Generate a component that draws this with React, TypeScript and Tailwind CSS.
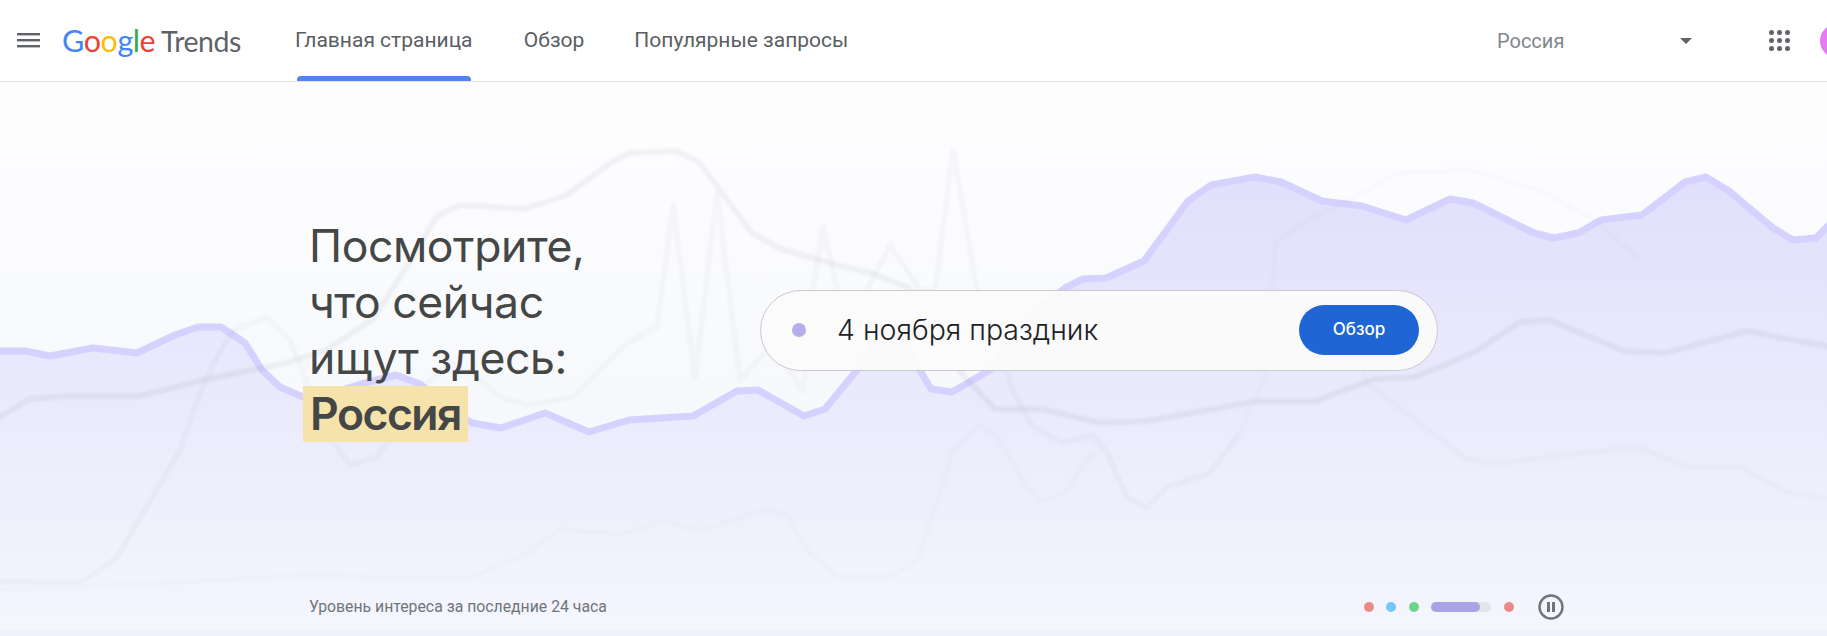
import React from 'react';

const interestLine =
  'M-5 351 L25 351 L50 356 L93 348 L137 353 L175 335 L198 327 L221 327 L245 343 L262 370 L280 387 L310 400 L361 384 L396 375 L420 384 L450 410 L472 423 L501 428 L545 413 L589 432 L629 420 L693 416 L737 391 L758 390 L804 416 L825 409 L857 370 L885 330 L905 345 L931 389 L952 392 L990 370 L1030 315 L1065 288 L1083 279 L1106 278 L1144 261 L1188 201 L1211 185 L1255 177 L1281 182 L1322 201 L1362 206 L1406 220 L1450 199 L1473 203 L1534 233 L1554 238 L1578 233 L1601 220 L1642 215 L1685 182 L1706 177 L1729 191 L1773 228 L1793 240 L1816 238 L1832 222';

const backgroundLines = [
  {
    d: 'M-5 420 L29 399 L70 396 L140 396 L204 380 L286 363 L326 350 L373 319 L402 274 L437 216 L460 205 L524 209 L565 196 L612 162 L629 153 L676 151 L699 162 L752 233 L781 249 L833 264 L874 274 L909 288 L940 335 L961 373 L995 409 L1042 409 L1100 423 L1147 421 L1257 401 L1316 401 L1374 379 L1415 377 L1473 353 L1520 322 L1549 320 L1624 351 L1665 353 L1747 331 L1787 339 L1832 347',
    stroke: 'stroke-black/[0.045]',
  },
  {
    d: 'M-5 582 L80 582 L100 570 L117 557 L143 513 L180 450 L200 393 L217 357 L233 330 L267 317 L290 340 L307 383 L327 433 L350 465 L377 457 L393 433 L425 385 L450 362 L477 377 L500 397 L527 405 L573 397 L627 343 L657 327 L673 205 L695 378 L717 192 L740 380 L767 350 L790 370 L803 392 L813 290 L823 227 L837 290 L850 350 L867 290 L890 245 L920 290 L935 290 L953 150 L977 290 L1007 370 L1012 390 L1033 427 L1063 443 L1093 435 L1107 453 L1127 497 L1147 508 L1167 487 L1210 473 L1240 433',
    stroke: 'stroke-black/[0.025]',
  },
  {
    d: 'M1240 433 L1269 367 L1275 243 L1300 225 L1351 199 L1397 173 L1473 170 L1543 192 L1595 220 L1640 260',
    stroke: 'stroke-black/[0.01]',
  },
  {
    d: 'M-5 590 L120 585 L315 575 L408 579 L466 579 L524 555 L560 530 L624 534 L664 520 L700 531 L763 510 L787 515 L807 550 L837 577 L890 577 L917 560 L937 503 L953 450 L980 425 L997 437 L1027 487 L1040 502 L1063 493 L1093 453',
    stroke: 'stroke-black/[0.01]',
  },
  {
    d: 'M1330 300 L1368 384 L1467 459 L1496 464 L1555 456 L1636 447 L1688 467 L1741 467 L1787 493 L1832 499',
    stroke: 'stroke-black/[0.016]',
  },
];

function TrendBackdrop() {
  return (
    <svg className="absolute inset-0 w-full h-full" viewBox="0 0 1827 636" fill="none">
      <defs>
        <linearGradient id="interestFill" x1="0" y1="177" x2="0" y2="620" gradientUnits="userSpaceOnUse">
          <stop offset="0" stopColor="#e2dffc" />
          <stop offset="0.55" stopColor="#ebebfc" />
          <stop offset="1" stopColor="#f4f5fd" />
        </linearGradient>
      </defs>
      <path d={`${interestLine} L1832 640 L-5 640 Z`} fill="url(#interestFill)" />
      <path d={interestLine} className="stroke-[#d6d2ff]" strokeWidth={7} strokeLinejoin="round" />
      <g className="blur-[1px]">
        {backgroundLines.map((line) => (
          <path key={line.d} d={line.d} className={line.stroke} strokeWidth={6} strokeLinejoin="round" />
        ))}
      </g>
    </svg>
  );
}

function GoogleTrendsLogo() {
  return (
    <div className="flex items-baseline font-['Lato',sans-serif] text-[30.5px] leading-none tracking-[-0.5px]">
      <span className="text-[#4285f4]">G</span>
      <span className="text-[#ea4335]">o</span>
      <span className="text-[#fbbc05]">o</span>
      <span className="text-[#4285f4]">g</span>
      <span className="text-[#34a853]">l</span>
      <span className="text-[#ea4335]">e</span>
      <span className="ml-[6px] text-[#5f6368] text-[28.5px] font-normal">Trends</span>
    </div>
  );
}

function Header() {
  return (
    <header className="relative z-10 flex items-center h-[82px] shrink-0 bg-white border-b border-[#e2e2e2] font-['Roboto',sans-serif]">
      <svg className="ml-[17px] w-[23px] h-[15px] shrink-0" viewBox="0 0 23 15" fill="#5f6368">
        <rect width="23" height="2.4" y="0" />
        <rect width="23" height="2.4" y="6" />
        <rect width="23" height="2.4" y="12" />
      </svg>
      <div className="ml-[22px]">
        <GoogleTrendsLogo />
      </div>
      <nav className="flex ml-[54px] h-full text-[21px] font-normal text-[#5a5e63] whitespace-nowrap">
        <a className="relative flex items-center w-[178px] justify-center">
          Главная страница
          <span className="absolute bottom-0 left-[2px] right-[2px] h-[5px] rounded-t-[4px] bg-[#4f86e8]" />
        </a>
        <a className="flex items-center ml-[51px]">Обзор</a>
        <a className="flex items-center ml-[50px]">Популярные запросы</a>
      </nav>
      <div className="ml-auto flex items-center">
        <span className="text-[20px] text-[#80868b] w-[183px]">Россия</span>
        <span className="w-0 h-0 border-x-[6px] border-x-transparent border-t-[6px] border-t-[#5f6368]" />
        <svg className="ml-[77px] w-[21px] h-[21px]" viewBox="0 0 21 21" fill="#5f6368">
          {[2.5, 10.5, 18.5].flatMap((cy) =>
            [2.5, 10.5, 18.5].map((cx) => <circle key={`${cx}-${cy}`} cx={cx} cy={cy} r="2.5" />)
          )}
        </svg>
        <div className="ml-[30px] -mr-[27px] w-[34px] h-[34px] rounded-full bg-[#e57bf3]" />
      </div>
    </header>
  );
}

export default function App() {
  return (
    <div className="relative flex flex-col h-[636px] overflow-hidden bg-gradient-to-b from-white via-[#f9fafd] to-[#f4f5fc]">
      <TrendBackdrop />
      <Header />

      <main className="relative flex-1 flex items-center pl-[309px] font-['Inter',sans-serif] text-[#444746]">
        <h1 className="w-[451px] text-[44.5px] leading-[56px] font-normal tracking-[-0.4px]">
          Посмотрите,
          <br />
          что сейчас
          <br />
          ищут здесь:
          <br />
          <span className="inline-block -ml-[6px] px-[7px] bg-[#f6e2ab] font-semibold tracking-[-1.5px]">Россия</span>
        </h1>
        <div className="flex items-center w-[678px] h-[81px] rounded-full border border-[#c9c9ce] bg-[#fbfbfb]/95">
          <span className="ml-[31px] w-[14px] h-[14px] rounded-full bg-[#b4afea]" />
          <span className="ml-[31px] text-[28.5px] text-[#202124] font-light">4 ноября праздник</span>
          <button className="ml-auto mr-[18px] w-[120px] h-[50px] rounded-full bg-[#1f66d4] text-white text-[17px] font-medium">
            Обзор
          </button>
        </div>
      </main>

      <footer className="relative flex items-center h-[52px] pt-[5px] pl-[309px] mb-[6px] font-['Roboto',sans-serif]">
        <span className="text-[15.8px] text-[#70757a] whitespace-nowrap">Уровень интереса за последние 24 часа</span>
        <div className="ml-[757px] flex items-center">
          <span className="w-[10px] h-[10px] rounded-full bg-[#ea8a86]" />
          <span className="ml-[12px] w-[10px] h-[10px] rounded-full bg-[#73c6fb]" />
          <span className="ml-[13px] w-[10px] h-[10px] rounded-full bg-[#6cd48b]" />
          <span className="ml-[12px] w-[60px] h-[10px] rounded-full bg-[#e4e4ea]">
            <span className="block w-[49px] h-full rounded-full bg-[#aaa3e6]" />
          </span>
          <span className="ml-[13px] w-[10px] h-[10px] rounded-full bg-[#ea8a86]" />
          <svg className="ml-[24px] w-[26px] h-[26px]" viewBox="0 0 26 26" fill="none">
            <circle cx="13" cy="13" r="11.5" stroke="#70757a" strokeWidth="2.4" />
            <rect x="9" y="8" width="3" height="10" fill="#70757a" />
            <rect x="14" y="8" width="3" height="10" fill="#70757a" />
          </svg>
        </div>
      </footer>
      <div className="absolute bottom-0 inset-x-0 h-[6px] bg-[#eff1fa]" />
    </div>
  );
}
